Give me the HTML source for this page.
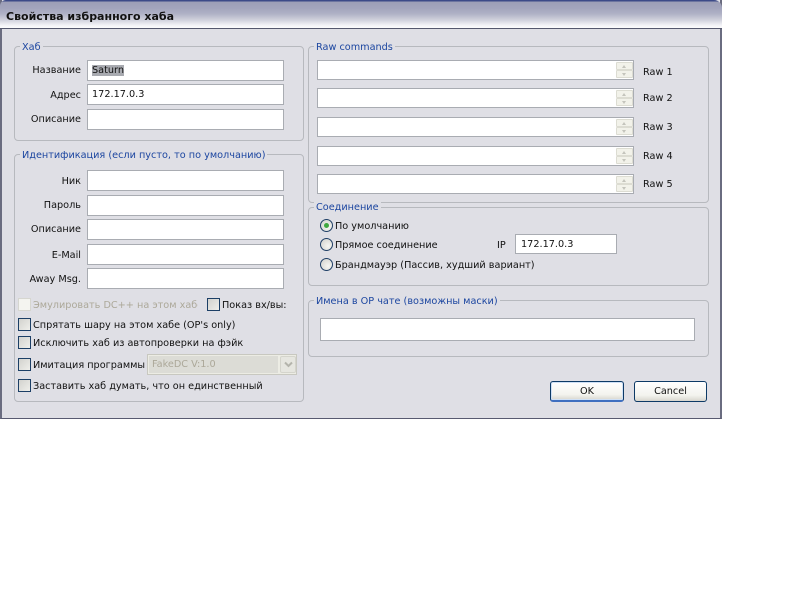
<!DOCTYPE html>
<html><head><meta charset="utf-8">
<style>
html,body{margin:0;padding:0;background:#fff;width:800px;height:600px;overflow:hidden}
body{position:relative;font-family:"DejaVu Sans","Liberation Sans",sans-serif;font-size:9.7px;color:#111}
div{position:absolute;box-sizing:border-box}
.t{white-space:nowrap;line-height:14px;height:14px}
.r{text-align:right;width:80px;left:1px}
.in{background:#fff;border:1px solid #a9acb2;left:87px;width:197px;height:21px;padding:3px 0 0 4px;line-height:14px;white-space:nowrap}
.g{border:1px solid #b7b9be;border-radius:4px;}
.l{color:#1c46a0;background:#dfdfe5;padding:0 2px;white-space:nowrap;line-height:14px;height:14px}
.raw{background:#fff;border:1px solid #a9acb2;left:317px;width:317px;height:20px}
.sp{position:absolute;left:298px;top:1px;width:17px;height:8px;background:#f2f2ea;border:1px solid #dcdcd2;border-radius:1px}
.sp.b{top:9px}
.sp i{position:absolute;left:5px;top:2px;width:0;height:0;border:2.5px solid transparent;border-top:0;border-bottom:3px solid #c4c4bc}
.sp.b i{border-bottom:0;border-top:3px solid #c4c4bc}
.cb{width:13px;height:13px;border:1px solid #1c3f66;background:linear-gradient(135deg,#d2d2ce,#efefeb)}
.cb.d{border-color:#d6d6d0;background:#f4f4f0}
.rd{width:13px;height:13px;border:1px solid #1f3f66;border-radius:50%;background:radial-gradient(circle at 65% 65%,#f6f6f2,#cfcfca)}
.btn{height:21px;width:74px;border:1px solid #0d3a66;border-radius:3px;text-align:center;line-height:19px;background:linear-gradient(#fff,#f3f3ee 70%,#d8d6ce)}
</style></head><body>
<div style="left:0;top:0;width:722px;height:419px;background:#dfdfe5;border:1px solid #585a70;border-top:0;border-right:2px solid #6a6c80;border-left:2px solid #6a6c80"></div>
<div style="left:0;top:0;width:722px;height:29px;background:linear-gradient(#3c4a88 0,#3c4a88 1px,#9c9eb6 2px,#a2a4bc 8px,#b0b2c6 14px,#d0d1dc 20px,#f2f2f6 25px,#fdfdfe 28px);border-bottom:1px solid #55586e;border-radius:6px 8px 0 0"></div>
<div class="t" style="left:6px;top:10px;font-weight:bold;font-size:11px;color:#111">Свойства избранного хаба</div>

<div class="g" style="left:14px;top:46px;width:290px;height:95px"></div>
<div class="l" style="left:20px;top:41px">Хаб</div>
<div class="t r" style="top:64px">Название</div>
<div class="in" style="top:60px"><span style="background:#a8aab0">Saturn</span></div>
<div class="t r" style="top:89px">Адрес</div>
<div class="in" style="top:84px">172.17.0.3</div>
<div class="t r" style="top:113px">Описание</div>
<div class="in" style="top:109px"></div>

<div class="g" style="left:14px;top:154px;width:290px;height:248px"></div>
<div class="l" style="left:20px;top:149px">Идентификация (если пусто, то по умолчанию)</div>
<div class="t r" style="top:175px">Ник</div>
<div class="in" style="top:170px"></div>
<div class="t r" style="top:199px">Пароль</div>
<div class="in" style="top:195px"></div>
<div class="t r" style="top:223px">Описание</div>
<div class="in" style="top:219px"></div>
<div class="t r" style="top:249px">E-Mail</div>
<div class="in" style="top:244px"></div>
<div class="t r" style="top:273px">Away Msg.</div>
<div class="in" style="top:268px"></div>

<div class="cb d" style="left:18px;top:298px"></div>
<div class="t" style="left:33px;top:299px;width:165px;overflow:hidden;color:#aca899">Эмулировать DC++ на этом хабе</div>
<div class="cb" style="left:207px;top:298px"></div>
<div class="t" style="left:222px;top:299px">Показ вх/вы:</div>
<div class="cb" style="left:18px;top:318px"></div>
<div class="t" style="left:33px;top:319px">Спрятать шару на этом хабе (OP's only)</div>
<div class="cb" style="left:18px;top:336px"></div>
<div class="t" style="left:33px;top:337px">Исключить хаб из автопроверки на фэйк</div>
<div class="cb" style="left:18px;top:358px"></div>
<div class="t" style="left:33px;top:359px">Имитация программы</div>
<div style="left:147px;top:354px;width:150px;height:21px;background:#ececE4;border:1px solid #c8c8c0"></div>
<div style="left:149px;top:356px;width:129px;height:17px;background:#dcdcd6"></div>
<div class="t" style="left:152px;top:358px;color:#aca899">FakeDC V:1.0</div>
<div style="left:280px;top:356px;width:16px;height:17px;background:#e6e6e0;border:1px solid #d4d4cc;border-radius:2px"></div>
<svg style="position:absolute;left:284px;top:361px" width="9" height="7"><path d="M1 1.5L4.5 5L8 1.5" fill="none" stroke="#b4b4ac" stroke-width="2"/></svg>
<div class="cb" style="left:18px;top:379px"></div>
<div class="t" style="left:33px;top:380px">Заставить хаб думать, что он единственный</div>

<div class="g" style="left:308px;top:46px;width:401px;height:157px"></div>
<div class="l" style="left:314px;top:41px">Raw commands</div>
<div class="raw" style="top:60px"><div class="sp"><i></i></div><div class="sp b"><i></i></div></div>
<div class="t" style="left:643px;top:66px">Raw 1</div>
<div class="raw" style="top:88px"><div class="sp"><i></i></div><div class="sp b"><i></i></div></div>
<div class="t" style="left:643px;top:92px">Raw 2</div>
<div class="raw" style="top:117px"><div class="sp"><i></i></div><div class="sp b"><i></i></div></div>
<div class="t" style="left:643px;top:121px">Raw 3</div>
<div class="raw" style="top:146px"><div class="sp"><i></i></div><div class="sp b"><i></i></div></div>
<div class="t" style="left:643px;top:150px">Raw 4</div>
<div class="raw" style="top:174px"><div class="sp"><i></i></div><div class="sp b"><i></i></div></div>
<div class="t" style="left:643px;top:178px">Raw 5</div>

<div class="g" style="left:308px;top:207px;width:401px;height:79px"></div>
<div class="l" style="left:314px;top:201px">Соединение</div>
<div class="rd" style="left:320px;top:219px"></div>
<div style="left:324px;top:223px;width:5px;height:5px;border-radius:50%;background:#3fa83f"></div>
<div class="t" style="left:335px;top:220px">По умолчанию</div>
<div class="rd" style="left:320px;top:238px"></div>
<div class="t" style="left:335px;top:239px">Прямое соединение</div>
<div class="t" style="left:497px;top:239px">IP</div>
<div class="in" style="left:515px;top:234px;width:102px;height:20px;padding-left:5px">172.17.0.3</div>
<div class="rd" style="left:320px;top:258px"></div>
<div class="t" style="left:335px;top:259px">Брандмауэр (Пассив, худший вариант)</div>

<div class="g" style="left:308px;top:300px;width:401px;height:57px"></div>
<div class="l" style="left:314px;top:295px">Имена в OP чате (возможны маски)</div>
<div class="in" style="left:320px;top:318px;width:375px;height:23px"></div>

<div class="btn" style="left:550px;top:381px;border-bottom:2px solid #3f6fc0;box-shadow:inset 0 0 0 1px #cfe0f6;line-height:20px">OK</div>
<div class="btn" style="left:634px;top:381px;width:73px;line-height:20px">Cancel</div>
</body></html>
